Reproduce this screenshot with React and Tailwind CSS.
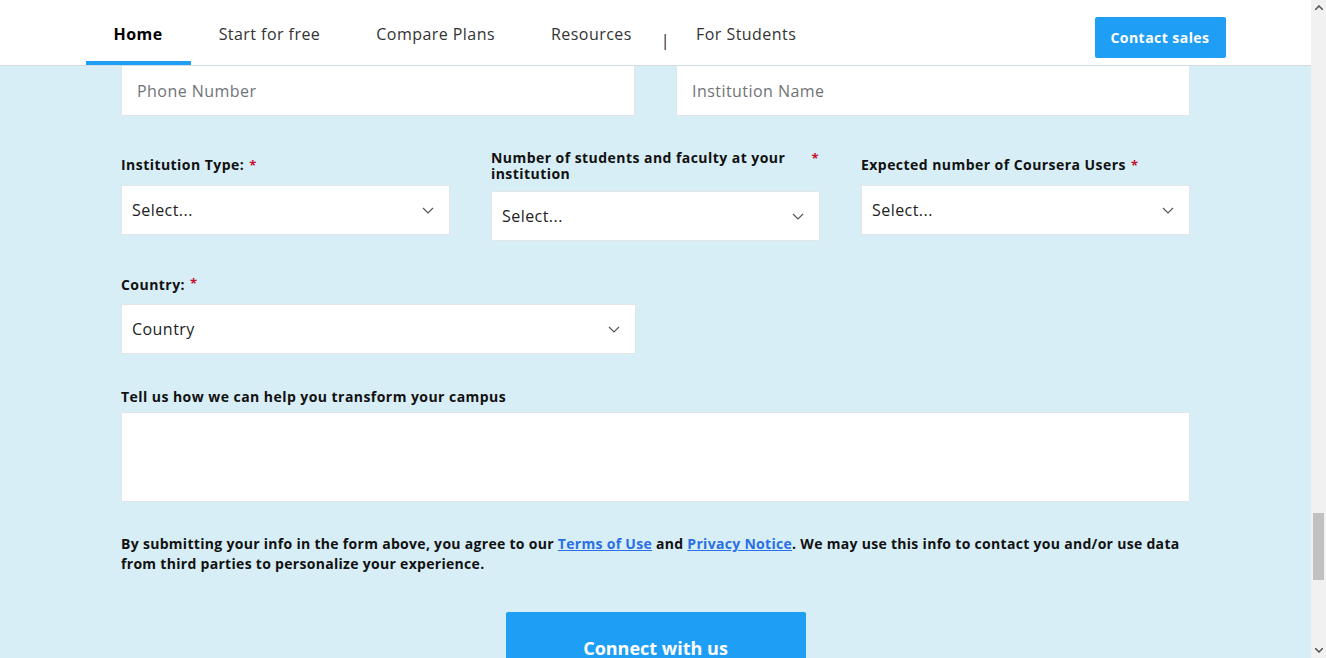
import React from "react";

const font = { fontFamily: '"Open Sans", "Liberation Sans", sans-serif' };

function Chevron() {
  return (
    <svg width="12" height="7" viewBox="0 0 12 7" fill="none" className="shrink-0">
      <path d="M1 1l5 5 5-5" stroke="#555" strokeWidth="1.2" />
    </svg>
  );
}

function Star() {
  return <span className="text-[#c8102e] text-[13px] ml-[5px] align-top">*</span>;
}

function Select({ text, className = "" }) {
  return (
    <div className={`h-[50px] bg-white border border-[#e3e6e8] flex items-center justify-between pl-[10px] pr-[15px] ${className}`}>
      <span className="text-[16px] text-[#222]">{text}</span>
      <Chevron />
    </div>
  );
}

export default function App() {
  const tabs = ["Home", "Start for free", "Compare Plans", "Resources"];
  return (
    <div className="w-[1326px] h-[658px] overflow-hidden flex bg-[#d7eef6] tracking-[0.45px]" style={font}>
      <div className="flex-1 flex flex-col">
        <header className="h-[66px] bg-white border-b border-[#d3dde1] shrink-0">
          <div className="w-[1140px] mx-auto h-full flex items-center justify-between">
            <nav className="flex h-full items-stretch">
              {tabs.map((t, i) => (
                <div
                  key={t}
                  className={`px-[28px] flex items-center text-[16px] border-b-4 pt-[6px] ${
                    i === 0 ? "font-bold text-black border-[#1f9ef5]" : "text-[#333] border-transparent"
                  }`}
                >
                  {t}
                </div>
              ))}
              <div className="flex items-center pt-[14px] pl-[1px] text-[#222] text-[16px]">|</div>
              <div className="px-[26px] flex items-center text-[16px] text-[#333] pt-[6px] border-b-4 border-transparent">
                For Students
              </div>
            </nav>
            <button className="w-[131px] h-[41px] bg-[#1f9ef5] rounded-[2px] text-white font-bold text-[14px] tracking-[0.45px] mt-[9px]">
              Contact sales
            </button>
          </div>
        </header>

        <main className="w-[1069px] mx-auto flex flex-col">
          <div className="grid grid-cols-2 gap-[41px]">
            <div className="h-[50px] bg-white border border-[#e3e6e8] border-t-0 flex items-center px-[15px] text-[16px] text-[#6f7477]">
              Phone Number
            </div>
            <div className="h-[50px] bg-white border border-[#e3e6e8] border-t-0 flex items-center px-[15px] text-[16px] text-[#6f7477]">
              Institution Name
            </div>
          </div>

          <div className="grid grid-cols-3 gap-[41px] mt-[34px] items-end">
            <div>
              <div className="h-[34px] flex items-end pb-[10px] text-[14px] font-bold text-[#111]">
                Institution Type:<Star />
              </div>
              <Select text="Select..." />
              <div className="h-[6px]" />
            </div>
            <div>
              <div className="flex justify-between text-[14px] font-bold text-[#111] leading-[16px] pb-[9px] pr-[1px]">
                <span className="w-[300px]">Number of students and faculty at your institution</span>
                <span className="text-[#c8102e] text-[13px]">*</span>
              </div>
              <Select text="Select..." />
            </div>
            <div>
              <div className="h-[34px] flex items-end pb-[10px] text-[14px] font-bold text-[#111]">
                Expected number of Coursera Users<Star />
              </div>
              <Select text="Select..." />
              <div className="h-[6px]" />
            </div>
          </div>

          <div className="mt-[33px] text-[14px] font-bold text-[#111] h-[30px]">
            Country:<Star />
          </div>
          <Select text="Country" className="w-[515px]" />

          <div className="mt-[32px] text-[14px] font-bold text-[#111] h-[26px]">
            Tell us how we can help you transform your campus
          </div>
          <div className="h-[90px] bg-white border border-[#e3e6e8]" />

          <p className="mt-[32px] text-[14px] font-bold text-[#111] leading-[20px] tracking-[0.3px]">
            By submitting your info in the form above, you agree to our{" "}
            <a className="text-[#2a6fe6] underline">Terms of Use</a> and{" "}
            <a className="text-[#2a6fe6] underline">Privacy Notice</a>. We may use this info to contact you and/or use data from
            third parties to personalize your experience.
          </p>

          <div className="flex justify-center mt-[38px]">
            <button className="w-[300px] h-[62px] bg-[#1f9ef5] rounded-t-[2px] text-white font-bold text-[18px] tracking-normal pt-[10px]">
              Connect with us
            </button>
          </div>
        </main>
      </div>

      <div className="w-[15px] h-full bg-[#f1f1f1] flex flex-col items-center shrink-0">
        <div className="h-[15px] flex items-center justify-center">
          <svg width="8" height="5" viewBox="0 0 8 5"><path d="M0 5L4 1 8 5" fill="none" stroke="#505050" strokeWidth="1.5" /></svg>
        </div>
        <div className="flex-1 w-full relative">
          <div className="mt-[498px] mx-[2px] h-[67px] bg-[#c1c1c1]" />
        </div>
        <div className="h-[15px] flex items-center justify-center">
          <svg width="8" height="5" viewBox="0 0 8 5"><path d="M0 0L4 4 8 0" fill="none" stroke="#505050" strokeWidth="1.5" /></svg>
        </div>
      </div>
    </div>
  );
}
